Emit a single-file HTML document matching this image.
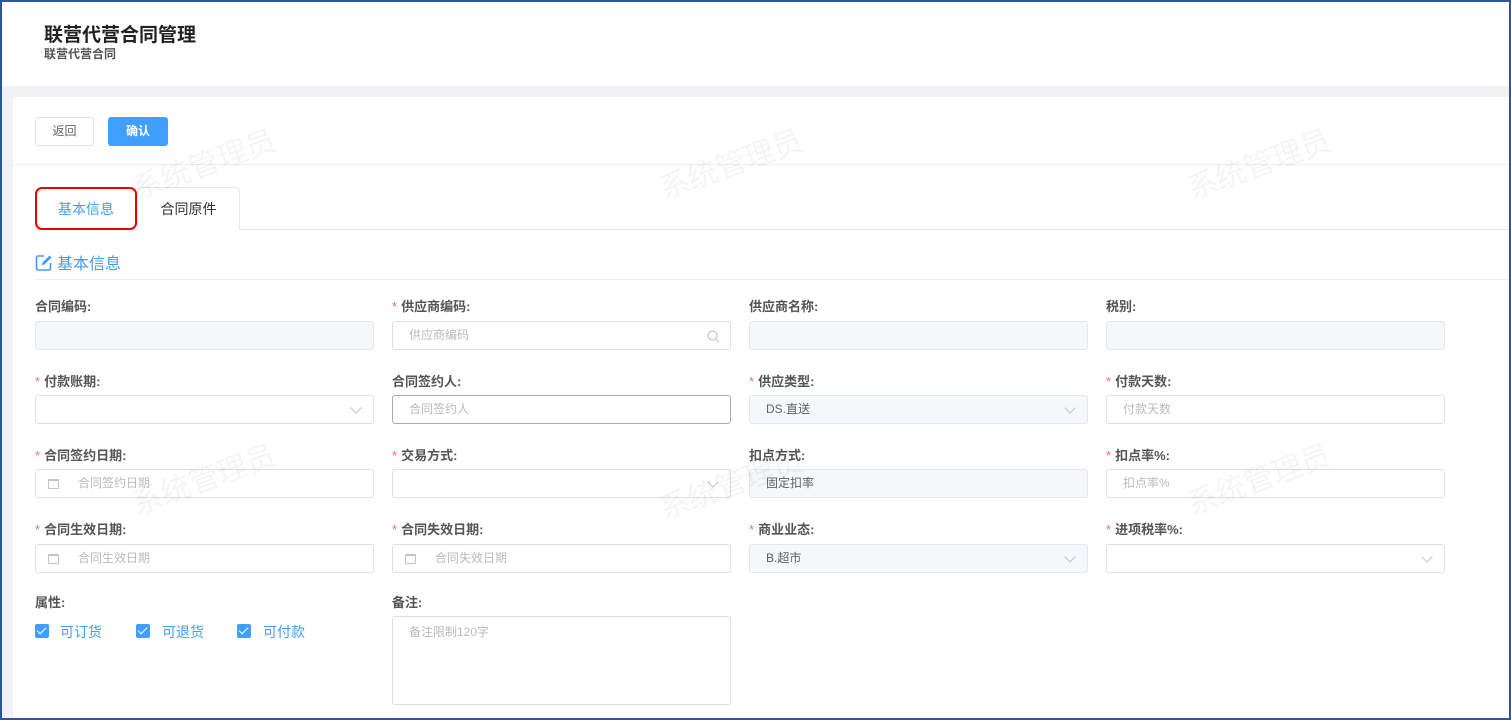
<!DOCTYPE html>
<html><head><meta charset="utf-8"><style>
*{box-sizing:border-box;margin:0;padding:0}
body{width:1511px;height:720px;overflow:hidden;background:#fff;font-family:"Liberation Sans","Noto Sans CJK SC",sans-serif;position:relative}
.frame{position:absolute;left:0;top:0;width:1511px;height:720px;border:2px solid #2f5597;z-index:50;pointer-events:none}
.a{position:absolute}
.lbl{position:absolute;font-size:13px;font-weight:bold;color:#555;white-space:nowrap}
.lbl i{color:#f56c6c;font-style:normal;font-weight:normal;margin-right:4px}
.in{position:absolute;width:339px;height:29px;border:1px solid #dcdfe6;border-radius:3px;background:#fff;font-size:12px;color:#bbb;line-height:27px;padding-left:16px}
.dis{background:#f5f7fa;border-color:#e4e7ed;color:#606266}
.arr{position:absolute;right:13px;top:8px;width:8px;height:8px;border-right:1px solid #c0c4cc;border-bottom:1px solid #c0c4cc;transform:rotate(45deg)}
.cal{position:absolute;left:12px;top:9px;width:11px;height:10px;border:1px solid #c0c4cc;border-top-width:2px;border-radius:1px}
.wm{position:absolute;font-size:30px;color:rgba(0,0,0,0.045);transform:rotate(-20deg);white-space:nowrap;z-index:40}
.cb{position:absolute;width:14px;height:14px;background:#409eff;border-radius:2px}
.cb:after{content:"";position:absolute;left:4px;top:1px;width:4px;height:8px;border-right:1.5px solid #fff;border-bottom:1.5px solid #fff;transform:rotate(45deg)}
.cbt{position:absolute;font-size:14px;color:#409eff}
</style></head><body>
<div class="frame"></div>
<div class="a" style="left:44px;top:20px;font-size:19px;font-weight:bold;color:#222">联营代营合同管理</div>
<div class="a" style="left:44px;top:45px;font-size:12px;font-weight:bold;color:#555">联营代营合同</div>
<div class="a" style="left:0;top:86px;width:1511px;height:11px;background:#f0f2f5"></div>
<div class="a" style="left:0;top:97px;width:13px;height:623px;background:#f0f2f5"></div>
<div class="a" style="left:35px;top:117px;width:59px;height:29px;border:1px solid #dcdfe6;border-radius:3px;font-size:12px;color:#606266;text-align:center;line-height:27px">返回</div>
<div class="a" style="left:108px;top:117px;width:60px;height:29px;background:#409eff;border-radius:3px;font-size:12px;font-weight:bold;color:#fff;text-align:center;line-height:29px">确认</div>
<div class="a" style="left:13px;top:164px;width:1498px;height:1px;background:#ebeef5"></div>
<div class="a" style="left:35px;top:229px;width:1476px;height:1px;background:#e4e7ed"></div>
<div class="a" style="left:137px;top:187px;width:103px;height:43px;border:1px solid #e4e7ed;border-bottom:none;border-radius:4px 4px 0 0;background:#fff;font-size:14px;color:#303133;text-align:center;line-height:42px">合同原件</div>
<div class="a" style="left:35px;top:187px;width:102px;height:43px;background:#fff;font-size:14px;color:#409eff;text-align:center;line-height:40px;border:2px solid #e00;border-radius:7px">基本信息</div>
<svg class="a" style="left:35px;top:254px" width="18" height="17" viewBox="0 0 18 17"><path d="M9 2H3a1.5 1.5 0 0 0-1.5 1.5v11A1.5 1.5 0 0 0 3 16h11a1.5 1.5 0 0 0 1.5-1.5V9" fill="none" stroke="#409eff" stroke-width="1.6"/><path d="M14.5 1.5l2 2-7 7-2.8.8.8-2.8z" fill="#409eff"/></svg>
<div class="a" style="left:57px;top:250px;font-size:16px;color:#409eff">基本信息</div>
<div class="a" style="left:35px;top:279px;width:1476px;height:1px;background:#ebeef5"></div>

<div class="lbl" style="left:35px;top:296px">合同编码:</div>
<div class="lbl" style="left:392px;top:296px"><i>*</i>供应商编码:</div>
<div class="lbl" style="left:749px;top:296px">供应商名称:</div>
<div class="lbl" style="left:1106px;top:296px">税别:</div>
<div class="in dis" style="left:35px;top:321px"></div>
<div class="in" style="left:392px;top:321px">供应商编码<svg style="position:absolute;right:10px;top:8px" width="13" height="13"><circle cx="5.5" cy="5.5" r="4.5" fill="none" stroke="#c0c4cc" stroke-width="1.2"/><path d="M9 9l3 3" stroke="#c0c4cc" stroke-width="1.2"/></svg></div>
<div class="in dis" style="left:749px;top:321px"></div>
<div class="in dis" style="left:1106px;top:321px"></div>

<div class="lbl" style="left:35px;top:371px"><i>*</i>付款账期:</div>
<div class="lbl" style="left:392px;top:371px">合同签约人:</div>
<div class="lbl" style="left:749px;top:371px"><i>*</i>供应类型:</div>
<div class="lbl" style="left:1106px;top:371px"><i>*</i>付款天数:</div>
<div class="in" style="left:35px;top:395px"><span class="arr"></span></div>
<div class="in" style="left:392px;top:395px;border-color:#a8abb2">合同签约人</div>
<div class="in dis" style="left:749px;top:395px">DS.直送<span class="arr"></span></div>
<div class="in" style="left:1106px;top:395px">付款天数</div>

<div class="lbl" style="left:35px;top:445px"><i>*</i>合同签约日期:</div>
<div class="lbl" style="left:392px;top:445px"><i>*</i>交易方式:</div>
<div class="lbl" style="left:749px;top:445px">扣点方式:</div>
<div class="lbl" style="left:1106px;top:445px"><i>*</i>扣点率%:</div>
<div class="in" style="left:35px;top:469px;padding-left:42px"><span class="cal"></span>合同签约日期</div>
<div class="in" style="left:392px;top:469px"><span class="arr"></span></div>
<div class="in dis" style="left:749px;top:469px">固定扣率</div>
<div class="in" style="left:1106px;top:469px">扣点率%</div>

<div class="lbl" style="left:35px;top:519px"><i>*</i>合同生效日期:</div>
<div class="lbl" style="left:392px;top:519px"><i>*</i>合同失效日期:</div>
<div class="lbl" style="left:749px;top:519px"><i>*</i>商业业态:</div>
<div class="lbl" style="left:1106px;top:519px"><i>*</i>进项税率%:</div>
<div class="in" style="left:35px;top:544px;padding-left:42px"><span class="cal"></span>合同生效日期</div>
<div class="in" style="left:392px;top:544px;padding-left:42px"><span class="cal"></span>合同失效日期</div>
<div class="in dis" style="left:749px;top:544px">B.超市<span class="arr"></span></div>
<div class="in" style="left:1106px;top:544px"><span class="arr"></span></div>

<div class="lbl" style="left:35px;top:592px">属性:</div>
<div class="lbl" style="left:392px;top:592px">备注:</div>
<div class="cb" style="left:35px;top:624px"></div><div class="cbt" style="left:60px;top:622px">可订货</div>
<div class="cb" style="left:136px;top:624px"></div><div class="cbt" style="left:162px;top:622px">可退货</div>
<div class="cb" style="left:237px;top:624px"></div><div class="cbt" style="left:263px;top:622px">可付款</div>
<div class="in" style="left:392px;top:616px;height:89px;line-height:30px">备注限制120字</div>

<div class="wm" style="left:128px;top:140px">系统管理员</div>
<div class="wm" style="left:655px;top:140px">系统管理员</div>
<div class="wm" style="left:1183px;top:140px">系统管理员</div>
<div class="wm" style="left:128px;top:455px">系统管理员</div>
<div class="wm" style="left:655px;top:460px">系统管理员</div>
<div class="wm" style="left:1183px;top:455px">系统管理员</div>
</body></html>
